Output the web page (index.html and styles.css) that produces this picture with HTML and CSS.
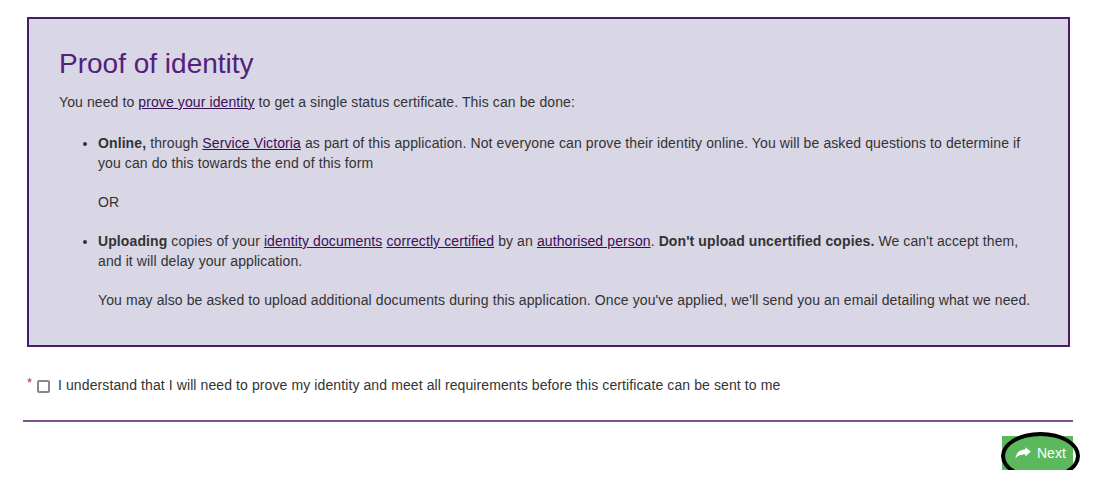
FILE: index.html
```html
<!DOCTYPE html>
<html lang="en">
<head>
<meta charset="utf-8">
<title>Proof of identity</title>
<link rel="stylesheet" href="styles.css">
</head>
<body>
<div class="page">
  <section class="panel">
    <h1 class="panel-title">Proof of identity</h1>
    <p class="intro">You need to <a href="#">prove your identity</a> to get a single status certificate. This can be done:</p>
    <ul class="options">
      <li>
        <p><strong>Online,</strong> through <a href="#">Service Victoria</a> as part of this application. Not everyone can prove their identity online. You will be asked questions to determine if you can do this towards the end of this form</p>
        <p>OR</p>
      </li>
      <li>
        <p><strong>Uploading</strong> copies of your <a href="#">identity documents</a> <a href="#">correctly certified</a> by an <a href="#">authorised person</a>. <strong>Don't upload uncertified copies.</strong> We can't accept them, and it will delay your application.</p>
        <p class="last">You may also be asked to upload additional documents during this application. Once you've applied, we'll send you an email detailing what we need.</p>
      </li>
    </ul>
  </section>

  <div class="confirm">
    <span class="required">*</span>
    <span class="checkbox"></span>
    <span class="confirm-text">I understand that I will need to prove my identity and meet all requirements before this certificate can be sent to me</span>
  </div>

  <hr class="divider">

  <div class="actions">
    <button class="btn-next" type="button">
      <svg class="btn-icon" width="16" height="12" viewBox="0 0 16 12" aria-hidden="true">
        <path d="M15.8 4.6 L10.4 0.2 V2.6 C5 2.6 1.2 5.6 0.4 11.8 C2.4 8.6 5.4 7.2 10.4 7.2 V9.6 Z" fill="#ffffff"/>
      </svg>
      <span>Next</span>
    </button>
    <span class="annotation"></span>
  </div>
</div>
</body>
</html>
```

FILE: styles.css
```css
* { box-sizing: border-box; }

html, body {
  margin: 0;
  padding: 0;
  background: #ffffff;
}

body {
  font-family: "Liberation Sans", Arial, sans-serif;
  font-size: 14px;
  line-height: 20px;
  letter-spacing: 0.1px;
  color: #333333;
}

.page {
  width: 1050px;
  margin-left: 23px;
  padding-top: 17px;
}

.panel {
  margin: 0 3px 0 4px;
  background: #d9d6e6;
  border: 2px solid #4a1a6b;
  padding: 29px 30px 35px 30px;
}

.panel-title {
  margin: 0 0 13px 0;
  font-size: 28px;
  line-height: 31px;
  font-weight: normal;
  letter-spacing: 0;
  color: #53217a;
}

.panel p {
  margin: 0;
}

.panel .intro {
  margin-bottom: 21px;
}

.panel a {
  color: #3b0f55;
  text-decoration: underline;
}

.panel strong {
  color: #333333;
}

.options {
  margin: 0;
  padding-left: 39px;
}

.options li {
  margin: 0;
}

.options li p {
  margin-bottom: 19px;
}

.options li p.last {
  margin-bottom: 0;
}

.confirm {
  display: flex;
  align-items: center;
  margin-top: 28px;
  padding-left: 4px;
  height: 20px;
}

.required {
  flex-shrink: 0;
  color: #c9302c;
  font-size: 13px;
  line-height: 13px;
  margin-top: -6px;
  width: 10px;
}

.checkbox {
  flex-shrink: 0;
  display: inline-block;
  width: 13px;
  height: 13px;
  border: 2px solid #888888;
  border-radius: 2px;
  background: #ffffff;
  margin-top: 2px;
  margin-right: 8px;
}

.confirm-text {
  color: #333333;
}

.divider {
  border: 0;
  height: 2px;
  background: #7c5393;
  margin: 25px 0 0 0;
}

.actions {
  position: relative;
  display: flex;
  justify-content: flex-end;
  padding-top: 14px;
}

.btn-next {
  display: flex;
  align-items: center;
  gap: 6px;
  height: 34px;
  width: 71px;
  padding: 0 0 0 13px;
  margin: 0;
  border: 0;
  border-radius: 0;
  background: #5cb85c;
  color: #ffffff;
  font-family: "Liberation Sans", Arial, sans-serif;
  font-size: 14px;
  letter-spacing: 0;
  cursor: pointer;
}

.btn-icon {
  display: block;
  margin-top: -1px;
}

.annotation {
  position: absolute;
  left: 978px;
  top: 10px;
  width: 79px;
  height: 48px;
  border: 4px solid #000000;
  border-radius: 50%;
  pointer-events: none;
}
```
